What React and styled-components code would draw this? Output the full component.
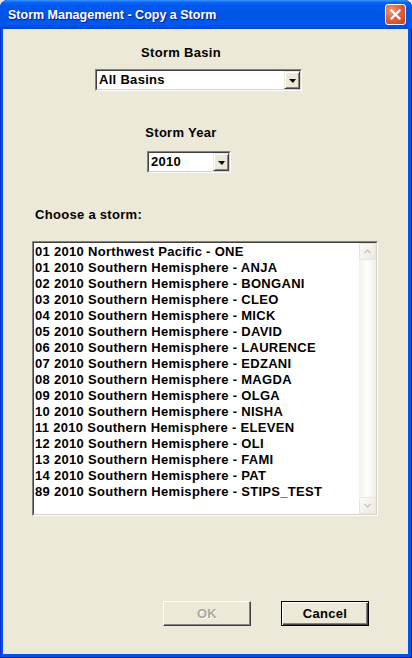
import React from 'react'
import styled, { createGlobalStyle } from 'styled-components'

const GlobalStyle = createGlobalStyle`
  html, body {
    margin: 0;
    padding: 0;
    background: #ece9d8;
  }
`;

const Window = styled.div`
  width: 412px;
  height: 658px;
  display: flex;
  flex-direction: column;
  background: #0055e5;
  border-radius: 8px 8px 0 0;
  overflow: hidden;
  box-sizing: border-box;
  box-shadow: inset -1px 0 #00138c, inset 0 -1px #00138c, inset 1px 0 #0831d9;
`;

const TitleBar = styled.div`
  height: 29px;
  flex: none;
  display: flex;
  align-items: center;
  justify-content: space-between;
  padding: 0 6px 0 8px;
  background: linear-gradient(to bottom, #3d95ff 0%, #0a66f4 8%, #0058ee 20%, #0054e3 55%, #0058ee 85%, #0044d0 100%);
`;

const Title = styled.span`
  font-family: "Liberation Sans", Arial, sans-serif;
  font-weight: bold;
  font-size: 12.5px;
  color: #fff;
  text-shadow: 1px 1px #0a1e8c;
`;

const CloseButton = styled.div`
  width: 19px;
  height: 19px;
  border: 1px solid #fff;
  border-radius: 3px;
  background: radial-gradient(circle at 30% 30%, #f09a7c 0%, #e2613d 45%, #c8411b 100%);
  display: flex;
  align-items: center;
  justify-content: center;
`;

const Body = styled.div`
  flex: 1;
  margin: 0 4px 4px 3px;
  background: #ece9d8;
  display: flex;
  flex-direction: column;
  align-items: flex-start;
  font-family: "Liberation Sans", Arial, sans-serif;
  font-weight: bold;
  font-size: 13px;
  letter-spacing: 0.3px;
  color: #000;
`;

const Label = styled.div`
  line-height: 14px;
  margin-top: ${p => p.$top}px;
  margin-left: ${p => p.$left || 0}px;
  width: ${p => (p.$center ? '356px' : 'auto')};
  text-align: ${p => (p.$center ? 'center' : 'left')};
`;

const Combo = styled.div`
  width: ${p => p.$width}px;
  height: 22px;
  margin-top: ${p => p.$top}px;
  margin-left: ${p => p.$left}px;
  box-sizing: border-box;
  background: #fff;
  border-style: solid;
  border-width: 1px;
  border-color: #848284 #fff #fff #848284;
  display: flex;
  align-items: stretch;
`;

const ComboInner = styled.div`
  flex: 1;
  display: flex;
  align-items: stretch;
  border-style: solid;
  border-width: 1px;
  border-color: #424142 #d6d3ce #d6d3ce #424142;
`;

const ComboText = styled.div`
  flex: 1;
  padding-left: 2px;
  line-height: 18px;
`;

const DropButton = styled.div`
  width: 16px;
  box-sizing: border-box;
  background: #ece9d8;
  border-style: solid;
  border-width: 1px;
  border-color: #ece9d8 #424142 #424142 #ece9d8;
  box-shadow: inset 1px 1px #fff, inset -1px -1px #848284;
  display: flex;
  align-items: center;
  justify-content: center;
`;

const Arrow = styled.div`
  width: 0;
  height: 0;
  border-left: 4px solid transparent;
  border-right: 3px solid transparent;
  border-top: 4px solid #000;
  margin-top: 1px;
`;

const ListBox = styled.div`
  width: 346px;
  height: 275px;
  margin-top: 19px;
  margin-left: 29px;
  box-sizing: border-box;
  border-style: solid;
  border-width: 1px;
  border-color: #848284 #fff #fff #848284;
  display: flex;
`;

const ListInner = styled.div`
  flex: 1;
  display: flex;
  background: #fff;
  border-style: solid;
  border-width: 1px;
  border-color: #424142 #d6d3ce #d6d3ce #424142;
`;

const Items = styled.ul`
  flex: 1;
  list-style: none;
  margin: 0;
  padding: 1px 0 0 1px;
`;

const Item = styled.li`
  line-height: 16px;
  height: 16px;
  white-space: nowrap;
`;

const ScrollBar = styled.div`
  width: 17px;
  display: flex;
  flex-direction: column;
  justify-content: space-between;
  background: linear-gradient(to right, #f3f1ec, #fefefb 50%, #f0efe7);
`;

const ScrollButton = styled.div`
  height: 17px;
  box-sizing: border-box;
  border: 1px solid #e8e6de;
  border-radius: 2px;
  background: linear-gradient(to bottom right, #fbfbf8, #ece9de);
  display: flex;
  align-items: center;
  justify-content: center;
`;

const ButtonRow = styled.div`
  display: flex;
  gap: 30px;
  margin-top: 85px;
  margin-left: 160px;
`;

const Button = styled.div`
  width: 88px;
  height: 25px;
  box-sizing: border-box;
  display: flex;
  align-items: center;
  justify-content: center;
  background: #ece9d8;
  border: 1px solid ${p => (p.$default ? '#000' : '#fff')};
  border-right-color: ${p => (p.$default ? '#000' : '#424142')};
  border-bottom-color: ${p => (p.$default ? '#000' : '#424142')};
  box-shadow: ${p =>
    p.$default
      ? 'inset 1px 1px #fff, inset -1px -1px #424142, inset -2px -2px #848284'
      : 'inset -1px -1px #848284'};
  color: ${p => (p.disabled ? '#aca899' : '#000')};
  text-shadow: ${p => (p.disabled ? '1px 1px #fff' : 'none')};
`;

const storms = [
  '01 2010 Northwest Pacific - ONE',
  '01 2010 Southern Hemisphere - ANJA',
  '02 2010 Southern Hemisphere - BONGANI',
  '03 2010 Southern Hemisphere - CLEO',
  '04 2010 Southern Hemisphere - MICK',
  '05 2010 Southern Hemisphere - DAVID',
  '06 2010 Southern Hemisphere - LAURENCE',
  '07 2010 Southern Hemisphere - EDZANI',
  '08 2010 Southern Hemisphere - MAGDA',
  '09 2010 Southern Hemisphere - OLGA',
  '10 2010 Southern Hemisphere - NISHA',
  '11 2010 Southern Hemisphere - ELEVEN',
  '12 2010 Southern Hemisphere - OLI',
  '13 2010 Southern Hemisphere - FAMI',
  '14 2010 Southern Hemisphere - PAT',
  '89 2010 Southern Hemisphere - STIPS_TEST',
];

function ComboBox({ value, width, top, left }) {
  return (
    <Combo $width={width} $top={top} $left={left}>
      <ComboInner>
        <ComboText>{value}</ComboText>
        <DropButton><Arrow /></DropButton>
      </ComboInner>
    </Combo>
  )
}

const Chevron = ({ up }) => (
  <svg width="7" height="5" viewBox="0 0 7 5">
    <path
      d={up ? 'M0.5 4 L3.5 1 L6.5 4' : 'M0.5 1 L3.5 4 L6.5 1'}
      fill="none"
      stroke="#c9c7ba"
      strokeWidth="1.5"
    />
  </svg>
);

export default function App() {
  return (
    <>
      <GlobalStyle />
      <Window>
        <TitleBar>
          <Title>Storm Management - Copy a Storm</Title>
          <CloseButton>
            <svg width="11" height="11" viewBox="0 0 11 11">
              <path d="M1.5 1.5 L9.5 9.5 M9.5 1.5 L1.5 9.5" stroke="#fff" strokeWidth="2.2" strokeLinecap="square" />
            </svg>
          </CloseButton>
        </TitleBar>

        <Body>
          <Label $top={17} $center>Storm Basin</Label>
          <ComboBox value='All Basins' width={207} top={9} left={92} />

          <Label $top={35} $center>Storm Year</Label>
          <ComboBox value='2010' width={84} top={11} left={144} />

          <Label $top={35} $left={32}>Choose a storm:</Label>
          <ListBox>
            <ListInner>
              <Items>
                {storms.map(s => <Item key={s}>{s}</Item>)}
              </Items>
              <ScrollBar>
                <ScrollButton><Chevron up /></ScrollButton>
                <ScrollButton><Chevron /></ScrollButton>
              </ScrollBar>
            </ListInner>
          </ListBox>

          <ButtonRow>
            <Button disabled>OK</Button>
            <Button $default>Cancel</Button>
          </ButtonRow>
        </Body>
      </Window>
    </>
  )
}
